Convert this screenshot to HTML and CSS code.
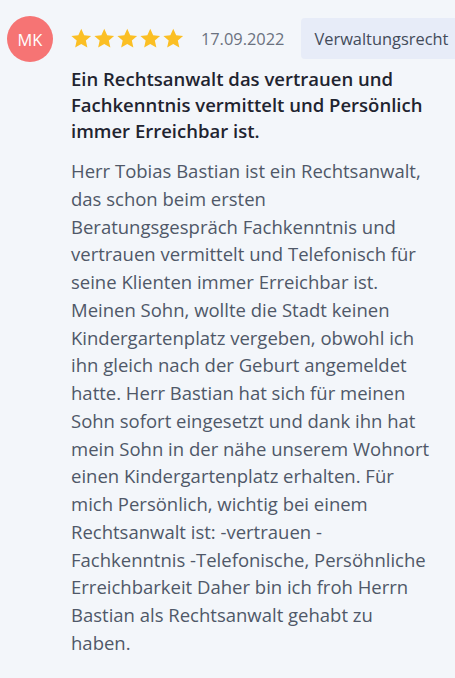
FILE: index.html
```html
<!DOCTYPE html>
<html lang="de">
<head>
<meta charset="utf-8">
<link rel="stylesheet" href="styles.css">
</head>
<body>
<div class="review">
  <div class="avatar">MK</div>
  <div class="content">
    <div class="meta">
      <div class="stars">
        <svg viewBox="0 0 24 24" class="star"><path d="M12 1.8l3.1 6.9 7.4.8-5.6 5 1.6 7.4L12 18.1l-6.5 3.8 1.6-7.4-5.6-5 7.4-.8z"/></svg>
        <svg viewBox="0 0 24 24" class="star"><path d="M12 1.8l3.1 6.9 7.4.8-5.6 5 1.6 7.4L12 18.1l-6.5 3.8 1.6-7.4-5.6-5 7.4-.8z"/></svg>
        <svg viewBox="0 0 24 24" class="star"><path d="M12 1.8l3.1 6.9 7.4.8-5.6 5 1.6 7.4L12 18.1l-6.5 3.8 1.6-7.4-5.6-5 7.4-.8z"/></svg>
        <svg viewBox="0 0 24 24" class="star"><path d="M12 1.8l3.1 6.9 7.4.8-5.6 5 1.6 7.4L12 18.1l-6.5 3.8 1.6-7.4-5.6-5 7.4-.8z"/></svg>
        <svg viewBox="0 0 24 24" class="star"><path d="M12 1.8l3.1 6.9 7.4.8-5.6 5 1.6 7.4L12 18.1l-6.5 3.8 1.6-7.4-5.6-5 7.4-.8z"/></svg>
      </div>
      <span class="date">17.09.2022</span>
      <span class="badge">Verwaltungsrecht</span>
    </div>
    <h3 class="title">Ein Rechtsanwalt das vertrauen und Fachkenntnis vermittelt und Persönlich immer Erreichbar ist.</h3>
    <p class="text">Herr Tobias Bastian ist ein Rechtsanwalt, das schon beim ersten Beratungsgespräch Fachkenntnis und vertrauen vermittelt und Telefonisch für seine Klienten immer Erreichbar ist. Meinen Sohn, wollte die Stadt keinen Kindergartenplatz vergeben, obwohl ich ihn gleich nach der Geburt angemeldet hatte. Herr Bastian hat sich für meinen Sohn sofort eingesetzt und dank ihn hat mein Sohn in der nähe unserem Wohnort einen Kindergartenplatz erhalten. Für mich Persönlich, wichtig bei einem Rechtsanwalt ist: -vertrauen - Fachkenntnis -Telefonische, Persöhnliche Erreichbarkeit Daher bin ich froh Herrn Bastian als Rechtsanwalt gehabt zu haben.</p>
  </div>
</div>
</body>
</html>
```
FILE: styles.css
```css
html, body {
  margin: 0;
  padding: 0;
  background: #f3f6fa;
  overflow: hidden;
}
body {
  font-family: "Open Sans", "Noto Sans", sans-serif;
  width: 455px;
  height: 678px;
}
.review {
  display: flex;
  align-items: flex-start;
  gap: 18px;
  padding: 16px 0 0 7px;
}
.avatar {
  flex: 0 0 46px;
  width: 46px;
  height: 46px;
  border-radius: 50%;
  background: #f67474;
  color: #fff;
  font-size: 16.4px;
  display: flex;
  align-items: center;
  justify-content: center;
}
.content {
  flex: 0 0 360px;
  width: 360px;
}
.meta {
  display: flex;
  align-items: center;
  white-space: nowrap;
  height: 41px;
  margin-top: 2px;
}
.stars {
  display: flex;
  gap: 0.6px;
  margin-left: -1px;
}
.star {
  width: 22.5px;
  height: 22.5px;
  fill: #fbbf24;
}
.date {
  margin-left: 16px;
  font-size: 16.4px;
  color: #6b7280;
}
.badge {
  margin-left: 17px;
  background: #e7ecf8;
  color: #434b5a;
  font-size: 16.4px;
  height: 41px;
  line-height: 41px;
  padding: 0 13px;
  border-radius: 4px;
}
.title {
  margin: 7px 0 0;
  font-size: 18.5px;
  font-weight: 600;
  line-height: 26px;
  color: #1f2430;
}
.text {
  margin: 13px 0 0;
  font-size: 18.5px;
  line-height: 27.75px;
  color: #4f5868;
}
```
